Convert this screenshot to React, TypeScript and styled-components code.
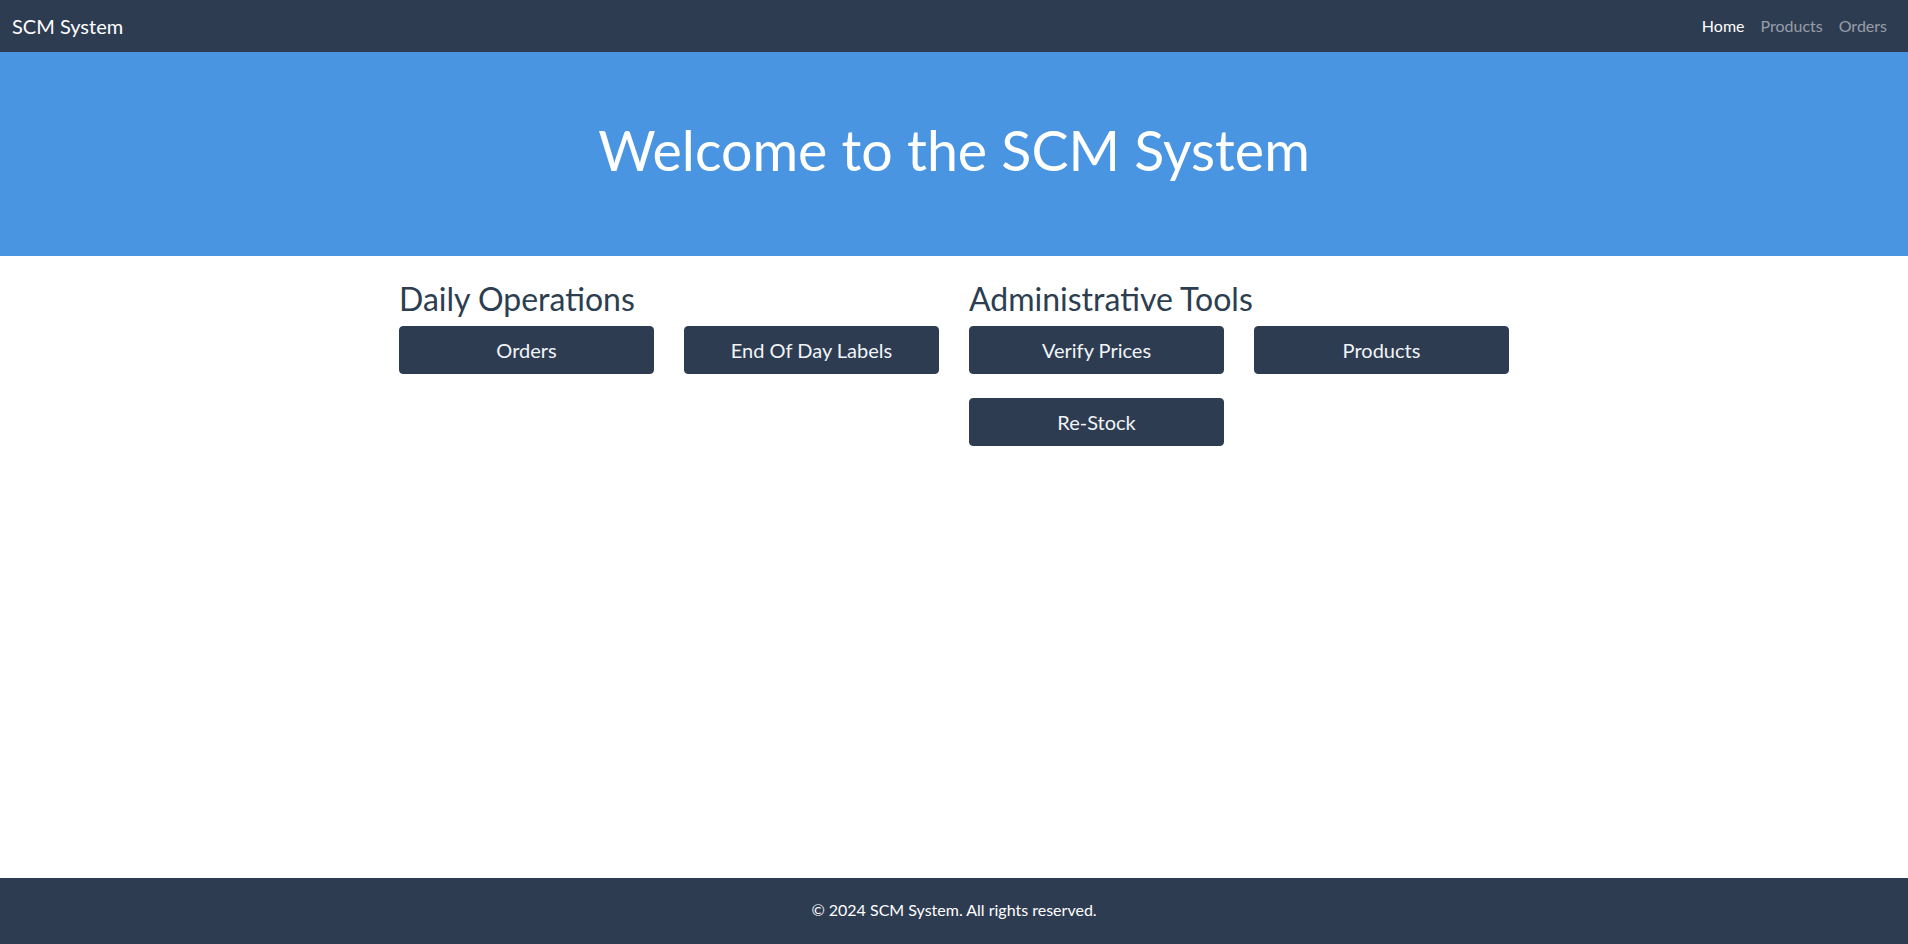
import React from "react";
import styled, { createGlobalStyle } from "styled-components";

const GlobalStyle = createGlobalStyle`
  * {
    box-sizing: border-box;
  }
  body {
    margin: 0;
    font-family: Lato, "Open Sans", "Liberation Sans", sans-serif;
    color: #2c3e50;
    background: #ffffff;
  }
`;

const Page = styled.div`
  min-height: 100vh;
  display: flex;
  flex-direction: column;
`;

const NavBar = styled.nav`
  height: 52px;
  background: #2e3c52;
  display: flex;
  align-items: center;
  justify-content: space-between;
  padding: 0 13px 0 12px;
`;

const Brand = styled.a`
  color: #ffffff;
  font-size: 20px;
  line-height: 30px;
  text-decoration: none;
  cursor: pointer;
`;

const NavLinks = styled.div`
  display: flex;
`;

const NavLink = styled.a<{ $active?: boolean }>`
  padding: 8px;
  font-size: 16px;
  line-height: 24px;
  text-decoration: none;
  cursor: pointer;
  color: ${(p) => (p.$active ? "#ffffff" : "rgba(255, 255, 255, 0.5)")};
`;

const Hero = styled.header`
  background: #4a95e2;
  padding: 64px 32px;
  margin-bottom: 24px;
  text-align: center;
`;

const HeroTitle = styled.h1`
  margin: 0 0 8px;
  color: #ffffff;
  font-size: 55.5px;
  font-weight: 400;
  line-height: 68px;
`;

const Main = styled.main`
  flex: 1;
`;

const Container = styled.div`
  width: 1140px;
  margin: 0 auto;
  padding: 0 15px;
  display: grid;
  grid-template-columns: 1fr 1fr;
  column-gap: 30px;
`;

const Section = styled.section``;

const SectionTitle = styled.h2`
  margin: 0 0 8px;
  font-size: 32px;
  font-weight: 400;
  line-height: 1.2;
  color: #2c3e50;
`;

const ButtonGrid = styled.div`
  display: grid;
  grid-template-columns: 1fr 1fr;
  column-gap: 30px;
  row-gap: 24px;
`;

const ActionButton = styled.button`
  height: 48px;
  padding: 8px 16px;
  border: 1px solid #2e3c52;
  border-radius: 4px;
  background: #2e3c52;
  color: #f1f4f7;
  font-family: inherit;
  font-size: 20px;
  line-height: 30px;
  cursor: pointer;
`;

const Footer = styled.footer`
  background: #2e3c52;
  color: #ffffff;
  text-align: center;
  padding: 20px 0 22px;
  font-size: 16px;
  line-height: 24px;
`;

const sections = [
  { title: "Daily Operations", actions: ["Orders", "End Of Day Labels"] },
  { title: "Administrative Tools", actions: ["Verify Prices", "Products", "Re-Stock"] },
];

export default function App() {
  return (
    <Page>
      <GlobalStyle />
      <NavBar>
        <Brand>SCM System</Brand>
        <NavLinks>
          <NavLink $active>Home</NavLink>
          <NavLink>Products</NavLink>
          <NavLink>Orders</NavLink>
        </NavLinks>
      </NavBar>
      <Hero>
        <HeroTitle>Welcome to the SCM System</HeroTitle>
      </Hero>
      <Main>
        <Container>
          {sections.map((s) => (
            <Section key={s.title}>
              <SectionTitle>{s.title}</SectionTitle>
              <ButtonGrid>
                {s.actions.map((a) => (
                  <ActionButton key={a}>{a}</ActionButton>
                ))}
              </ButtonGrid>
            </Section>
          ))}
        </Container>
      </Main>
      <Footer>© 2024 SCM System. All rights reserved.</Footer>
    </Page>
  );
}
